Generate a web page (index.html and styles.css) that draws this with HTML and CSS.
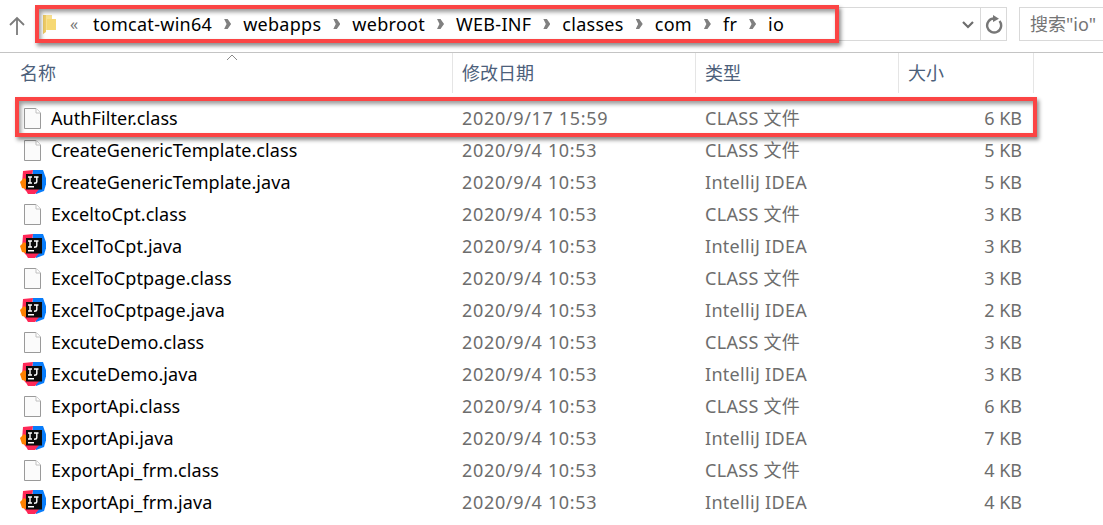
FILE: index.html
```html
<!DOCTYPE html>
<html lang="zh-CN">
<head>
<meta charset="utf-8">
<title>io</title>
<link rel="stylesheet" href="styles.css">
</head>
<body>
<svg class="defs" width="0" height="0" aria-hidden="true">
  <symbol id="file" viewBox="0 0 26 26">
    <path d="M4.500 3.500H16L20.500 8V23.500H4.500Z" fill="#fbfbfb" stroke="#9a9a9a" stroke-width="1"/>
    <path d="M16 3.500V8H20.500" fill="#fff" stroke="#c0c0c0" stroke-width="1"/>
  </symbol>
  <symbol id="idea" viewBox="0 0 26 26">
    <path d="M2 15 3 2 13 1 10 24 5 21Z" fill="#fe2857"/>
    <path d="M0 13 4 9 7 11 6 20 2 19Z" fill="#ff8100"/>
    <path d="M13 1 23 1 27 12 24 22 16 25 12 14Z" fill="#087cfa"/>
    <path d="M5 20 21 18 15 25 8 25Z" fill="#fe2857"/>
    <rect x="6" y="5" width="16" height="15.500" fill="#0b0b0b"/>
    <path d="M8 8h4M10 8v6M8 14h4M14 8h4.500M16.800 8v4.500q0 1.800-2.800 1.800" stroke="#fff" stroke-width="1.400" fill="none"/>
    <rect x="8" y="17" width="6" height="1.500" fill="#fff"/>
  </symbol>
</svg>

<header class="toolbar">
  <svg class="up" width="16" height="19" viewBox="0 0 16 19"><path d="M8 19V2M1 9l7-7 7 7" fill="none" stroke="#7b7b7b" stroke-width="1.800"/></svg>
  <div class="address">
    <svg class="folder" width="15" height="21" viewBox="0 0 15 21"><path d="M1 1h9v4h4v11H4L1 20Z" fill="#f8df8f"/><path d="M5 5h9v11H5Z" fill="#f6d873"/><path d="M1 1h3v17l-3 2Z" fill="#eecb66"/></svg>
    <span class="more">«</span>
    <nav class="crumbs">
      <span>tomcat-win64</span><i class="sep"></i>
      <span>webapps</span><i class="sep"></i>
      <span>webroot</span><i class="sep"></i>
      <span>WEB-INF</span><i class="sep"></i>
      <span>classes</span><i class="sep"></i>
      <span>com</span><i class="sep"></i>
      <span>fr</span><i class="sep"></i>
      <span>io</span>
    </nav>
    <svg class="chev" width="14" height="9" viewBox="0 0 14 9"><path d="M2 2l5 5 5-5" fill="none" stroke="#6d6d6d" stroke-width="2.200"/></svg>
    <div class="refresh">
      <svg width="18" height="19" viewBox="0 0 18 19"><path d="M14.500 6A7 7 0 1 1 9 3.500" fill="none" stroke="#777" stroke-width="2.400"/><path d="M8 0l6 3.700-6 3.300Z" fill="#777"/></svg>
    </div>
  </div>
  <div class="search">搜索"io"</div>
</header>

<div class="sort"><svg width="12" height="7" viewBox="0 0 12 7"><path d="M1 6l5-5 5 5" fill="none" stroke="#8a8a8a" stroke-width="1"/></svg></div>

<div class="columns">
  <div class="head">名称</div>
  <div class="head">修改日期</div>
  <div class="head">类型</div>
  <div class="head">大小</div>
</div>

<main class="list">
  <div class="row"><span class="name"><svg class="ico"><use href="#file"/></svg>AuthFilter.class</span><span class="date">2020/9/17 15:59</span><span class="type">CLASS 文件</span><span class="size">6 KB</span></div>
  <div class="row"><span class="name"><svg class="ico"><use href="#file"/></svg>CreateGenericTemplate.class</span><span class="date">2020/9/4 10:53</span><span class="type">CLASS 文件</span><span class="size">5 KB</span></div>
  <div class="row"><span class="name"><svg class="ico"><use href="#idea"/></svg>CreateGenericTemplate.java</span><span class="date">2020/9/4 10:53</span><span class="type">IntelliJ IDEA</span><span class="size">5 KB</span></div>
  <div class="row"><span class="name"><svg class="ico"><use href="#file"/></svg>ExceltoCpt.class</span><span class="date">2020/9/4 10:53</span><span class="type">CLASS 文件</span><span class="size">3 KB</span></div>
  <div class="row"><span class="name"><svg class="ico"><use href="#idea"/></svg>ExcelToCpt.java</span><span class="date">2020/9/4 10:53</span><span class="type">IntelliJ IDEA</span><span class="size">3 KB</span></div>
  <div class="row"><span class="name"><svg class="ico"><use href="#file"/></svg>ExcelToCptpage.class</span><span class="date">2020/9/4 10:53</span><span class="type">CLASS 文件</span><span class="size">3 KB</span></div>
  <div class="row"><span class="name"><svg class="ico"><use href="#idea"/></svg>ExcelToCptpage.java</span><span class="date">2020/9/4 10:53</span><span class="type">IntelliJ IDEA</span><span class="size">2 KB</span></div>
  <div class="row"><span class="name"><svg class="ico"><use href="#file"/></svg>ExcuteDemo.class</span><span class="date">2020/9/4 10:53</span><span class="type">CLASS 文件</span><span class="size">3 KB</span></div>
  <div class="row"><span class="name"><svg class="ico"><use href="#idea"/></svg>ExcuteDemo.java</span><span class="date">2020/9/4 10:53</span><span class="type">IntelliJ IDEA</span><span class="size">3 KB</span></div>
  <div class="row"><span class="name"><svg class="ico"><use href="#file"/></svg>ExportApi.class</span><span class="date">2020/9/4 10:53</span><span class="type">CLASS 文件</span><span class="size">6 KB</span></div>
  <div class="row"><span class="name"><svg class="ico"><use href="#idea"/></svg>ExportApi.java</span><span class="date">2020/9/4 10:53</span><span class="type">IntelliJ IDEA</span><span class="size">7 KB</span></div>
  <div class="row"><span class="name"><svg class="ico"><use href="#file"/></svg>ExportApi_frm.class</span><span class="date">2020/9/4 10:53</span><span class="type">CLASS 文件</span><span class="size">4 KB</span></div>
  <div class="row"><span class="name"><svg class="ico"><use href="#idea"/></svg>ExportApi_frm.java</span><span class="date">2020/9/4 10:53</span><span class="type">IntelliJ IDEA</span><span class="size">4 KB</span></div>
</main>

<div class="mark mark-address"></div>
<div class="mark mark-row"></div>
</body>
</html>
```
FILE: styles.css
```css
* { box-sizing: border-box; }
html, body { height: 100%; }
body {
  margin: 0;
  background: #fff;
  overflow: hidden;
  position: relative;
  font-family: "Noto Sans", "Noto Sans CJK SC", sans-serif;
  font-size: 18px;
  color: #6d6d6d;
}
.defs { position: absolute; }

.toolbar {
  height: 53px;
  display: flex;
  align-items: flex-start;
  border-bottom: 1px solid #c4c4c4;
}
.up { margin: 16px 0 0 9px; flex: none; }
.address {
  margin: 7px 0 0 17px;
  width: 965px;
  height: 34px;
  flex: none;
  border: 1px solid #d9d9d9;
  border-left: 0;
  display: flex;
  align-items: center;
}
.folder { flex: none; }
.more { margin-left: 13px; width: 23px; color: #777; font-size: 16px; }
.crumbs { display: flex; align-items: center; color: #000; flex: 1; letter-spacing: .28px; line-height: 30px; }
.sep {
  width: 7px; height: 10px; margin: 0 12px;
  background: #808080;
  clip-path: polygon(0 0, 50% 0, 100% 50%, 50% 100%, 0 100%, 35% 50%);
}
.chev { margin-right: 5px; flex: none; }
.refresh {
  width: 26px;
  height: 100%;
  flex: none;
  border-left: 1px solid #d9d9d9;
  display: flex;
  align-items: center;
  justify-content: center;
}
.search {
  margin: 7px 0 0 12px;
  flex: 1;
  height: 34px;
  border: 1px solid #d9d9d9;
  border-right: 0;
  padding-left: 10px;
  line-height: 32px;
  white-space: nowrap;
  overflow: hidden;
  color: #757575;
}

.sort { position: absolute; left: 226px; top: 54px; line-height: 0; }

.columns, .row {
  display: grid;
  grid-template-columns: 453px 243px 203px 135px;
}
.columns { height: 40px; }
.head {
  padding-left: 9px;
  line-height: 40px;
  color: #4c607a;
  border-right: 1px solid #e5e5e5;
}
.head:first-child { padding-left: 20px; }

.list { padding-top: 9px; }
.row { height: 32px; line-height: 32px; white-space: nowrap; }
.row > span { padding-left: 9px; }
.row > .name { padding-left: 20px; color: #000; display: flex; align-items: center; letter-spacing: .08px; }
.row > .date { letter-spacing: .67px; }
.row > .type { letter-spacing: .3px; }
.row > .size { padding: 0 12px 0 0; text-align: right; }
.ico { width: 26px; height: 26px; margin-right: 5px; flex: none; }

.mark {
  position: absolute;
  border: 4px solid #fb4444;
  box-shadow: 2px 3px 4px rgba(0, 0, 0, .45), inset 2px 3px 4px rgba(0, 0, 0, .4);
}
.mark-address { left: 35px; top: 5px; width: 804px; height: 38px; }
.mark-row { left: 15px; top: 97px; width: 1022px; height: 40px; }
```
